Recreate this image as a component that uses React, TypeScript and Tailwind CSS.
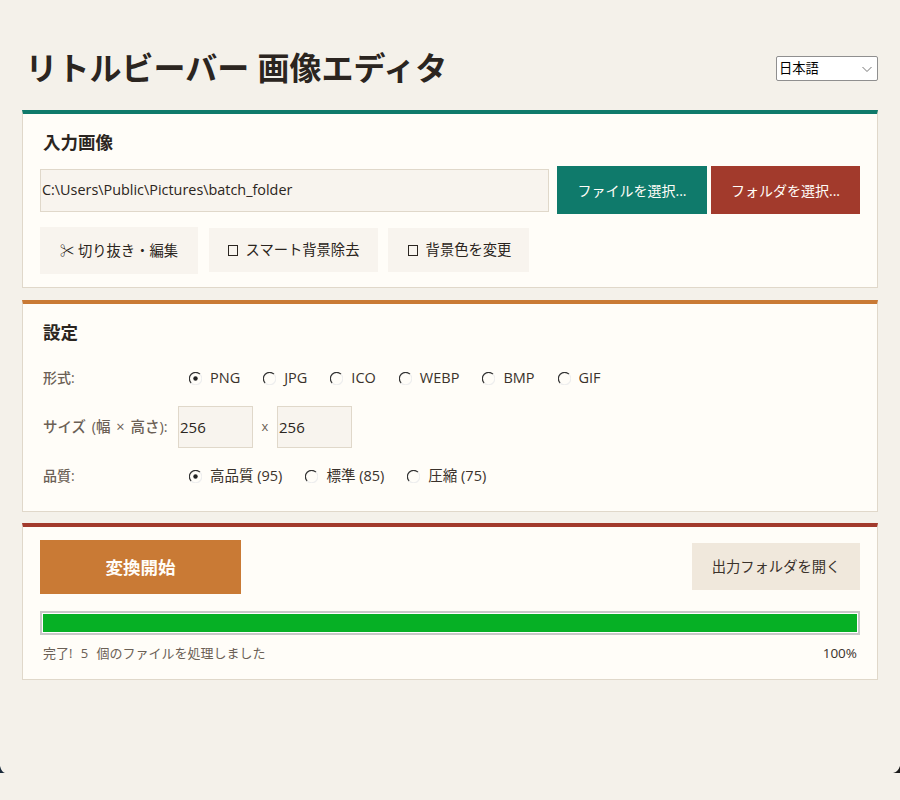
import React from "react";

const FONT = { fontFamily: '"Open Sans","Noto Sans CJK JP",sans-serif' };

function Radio({ label, checked }: { label: string; checked?: boolean }) {
  return (
    <span className="flex items-center gap-[8px] text-[14.5px] leading-[20px] text-[#3a322b]">
      <svg width="13" height="13" viewBox="0 0 13 13" className="shrink-0">
        <circle cx="6.5" cy="6.5" r="6" fill="#fffdf8" />
        <path d="M11 2.2A6 6 0 0 0 2.2 11" fill="none" stroke="#333" strokeWidth="1.2" />
        <path d="M2.2 11A6 6 0 0 0 11 2.2" fill="none" stroke="#eee" strokeWidth="1.2" />
        {checked && <circle cx="6.5" cy="6.5" r="2.2" fill="#222" />}
      </svg>
      {label}
    </span>
  );
}

function Card({ color, className, children }: { color: string; className: string; children: React.ReactNode }) {
  return (
    <section className={`border border-[#e0d8ca] bg-[#fffdf8] border-t-[4px] ${color} ${className}`}>
      {children}
    </section>
  );
}

export default function App() {
  return (
    <div style={FONT} className="relative h-[800px] w-[900px] overflow-hidden bg-[#f4f1ea] px-[22px] text-[#2b2520]">
      <header className="flex h-[110px] items-center justify-between pt-[26px]">
        <h1 className="pl-[3.5px] text-[32px] font-bold leading-[40px] text-[#2b2520]">リトルビーバー 画像エディタ</h1>
        <div className="relative h-[25px] w-[102px] rounded-[2px] border border-[#8f8f8f] bg-white pl-[2px] text-[13.3px] leading-[23px] text-black">
          日本語
          <svg className="absolute right-[5px] top-[9px]" width="10" height="7" viewBox="0 0 10 7">
            <path d="M0.5 1l4.5 4.5 4.5-4.5" fill="none" stroke="#777" strokeWidth="1" />
          </svg>
        </div>
      </header>

      <Card color="border-t-[#0f7a6b]" className="h-[178px] pl-[17px]">
        <h2 className="pl-[3px] pt-[16px] text-[17.5px] font-bold leading-[24px] text-[#2b2520]">入力画像</h2>
        <div className="mt-[12px] flex items-center">
          <div className="flex h-[43px] w-[509px] items-center border border-[#e0d8ca] bg-[#f8f4ee] pl-[1px] text-[14.4px]">
            C:\Users\Public\Pictures\batch_folder
          </div>
          <div className="ml-[8px] flex h-[48px] w-[150px] items-center justify-center bg-[#0f7a6b] text-[14px] text-[#fffdf8]">ファイルを選択...</div>
          <div className="ml-[4px] flex h-[48px] w-[149px] items-center justify-center bg-[#a23a2c] text-[14px] text-[#fffdf8]">フォルダを選択...</div>
        </div>
        <div className="mt-[13px] flex items-start text-[14.3px] text-[#2b2520]">
          <div className="flex h-[47px] w-[158px] items-center justify-center bg-[#f8f4ee]">✂ 切り抜き・編集</div>
          <div className="ml-[11px] mt-[1px] flex h-[44px] w-[169px] items-center justify-center gap-[8px] bg-[#f8f4ee]">
            <span className="h-[11px] w-[10px] border border-[#2b2520]" />スマート背景除去
          </div>
          <div className="ml-[10px] mt-[1px] flex h-[44px] w-[141px] items-center justify-center gap-[8px] bg-[#f8f4ee] pl-[2px]">
            <span className="h-[11px] w-[10px] border border-[#2b2520]" />背景色を変更
          </div>
        </div>
      </Card>

      <Card color="border-t-[#c97a35]" className="mt-[12px] h-[212px] px-[20px]">
        <h2 className="pt-[16px] text-[17.5px] font-bold leading-[24px]">設定</h2>
        <div className="mt-[12px] flex h-[44px] items-center">
          <span className="w-[146px] pb-[1px] text-[14px] font-medium text-[#6b6055]">形式:</span>
          <div className="flex gap-[23px]">
            <Radio label="PNG" checked />
            <Radio label="JPG" />
            <Radio label="ICO" />
            <Radio label="WEBP" />
            <Radio label="BMP" />
            <Radio label="GIF" />
          </div>
        </div>
        <div className="mt-[5px] flex h-[44px] items-center">
          <span className="w-[135px] whitespace-nowrap text-[14.5px] font-medium text-[#6b6055] [word-spacing:2px]">サイズ (幅 × 高さ):</span>
          <div className="flex h-[42px] w-[75px] items-center border border-[#e0d8ca] bg-[#f8f4ee] pl-[1px] text-[15px]">256</div>
          <span className="w-[24px] text-center text-[13px] text-[#6b6055]">x</span>
          <div className="flex h-[42px] w-[75px] items-center border border-[#e0d8ca] bg-[#f8f4ee] pl-[1px] text-[15px]">256</div>
        </div>
        <div className="mt-[5px] flex h-[44px] items-center">
          <span className="w-[146px] pb-[1px] text-[14px] font-medium text-[#6b6055]">品質:</span>
          <div className="flex gap-[23px]">
            <Radio label="高品質 (95)" checked />
            <Radio label="標準 (85)" />
            <Radio label="圧縮 (75)" />
          </div>
        </div>
      </Card>

      <Card color="border-t-[#a23a2c]" className="mt-[11px] h-[157px] pl-[17px] pr-[17px]">
        <div className="mt-[13px] flex items-start justify-between">
          <div className="flex h-[54px] w-[201px] items-center justify-center bg-[#c97a35] text-[17.5px] font-bold text-[#fffdf8]">変換開始</div>
          <div className="mt-[3px] flex h-[47px] w-[168px] items-center justify-center bg-[#f0e8dc] text-[14.3px] text-[#3a322b]">出力フォルダを開く</div>
        </div>
        <div className="mt-[17px] h-[24px] w-[820px] border-2 border-[#c8c8c8] bg-white p-[1px]">
          <div className="h-full w-full bg-[#06b025]" />
        </div>
        <div className="mt-[8px] flex items-center justify-between px-[3px] text-[13px] leading-[20px] text-[#6b6055]">
          <span className="[word-spacing:5px]">完了! 5 個のファイルを処理しました</span>
          <span className="text-[13.5px] text-[#3a322b]">100%</span>
        </div>
      </Card>

      <svg className="absolute left-0 top-[766px]" width="6" height="7" viewBox="0 0 6 7">
        <path d="M0 0V7H5Q1.5 6 0 0Z" fill="#1a2a3a" />
      </svg>
      <svg className="absolute right-0 top-[766px]" width="8" height="7" viewBox="0 0 8 7">
        <path d="M8 0V7H1Q6 6 8 0Z" fill="#1a1a1a" />
      </svg>
    </div>
  );
}
